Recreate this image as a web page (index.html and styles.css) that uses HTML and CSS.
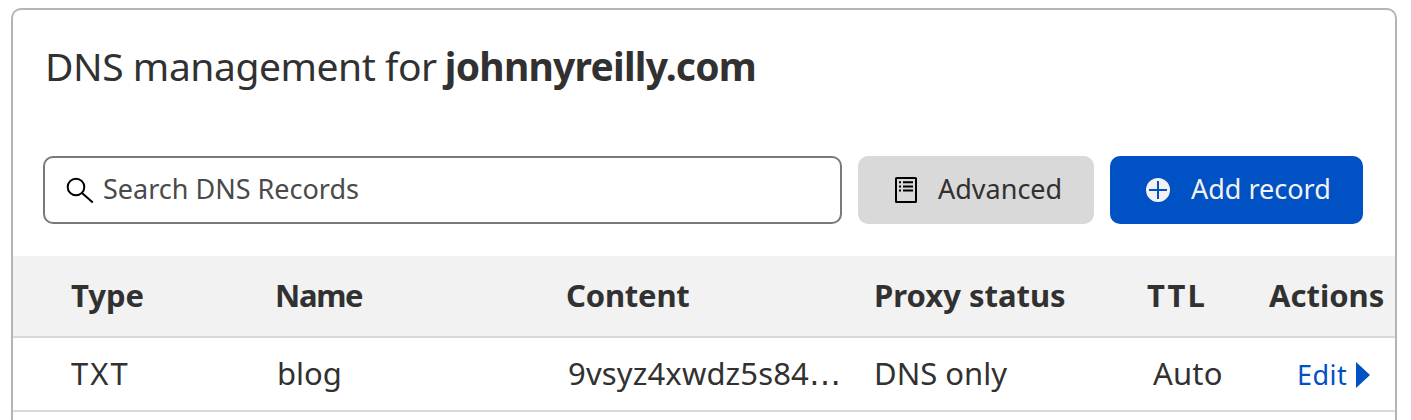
FILE: index.html
```html
<!DOCTYPE html>
<html lang="en">
<head>
<meta charset="utf-8">
<title>DNS management</title>
<link rel="stylesheet" href="styles.css">
</head>
<body>
<main class="card">
  <h1 class="title"><span class="t title-lead">DNS management for</span><strong class="t title-domain">johnnyreilly.com</strong></h1>
  <div class="toolbar">
    <div class="search">
      <svg class="search-icon" viewBox="0 0 28 28"><circle cx="10" cy="10" r="8.3"/><path d="M16 16L26.8 25.5"/></svg>
      <span class="t search-text">Search DNS Records</span>
    </div>
    <button class="btn advanced">
      <svg class="list-icon" viewBox="0 0 22 26"><rect x="1" y="1" width="20" height="24" rx=".6"/><path d="M4 5.2h2M8 5.2h10M4 9.4h2M8 9.4h10M4 13.6h2M8 13.6h10"/></svg>
      <span class="t">Advanced</span>
    </button>
    <button class="btn add">
      <svg class="plus-icon" viewBox="0 0 26 26"><circle cx="13" cy="13" r="13"/><path d="M13 4v18M4 13h18"/></svg>
      <span class="t">Add record</span>
    </button>
  </div>
  <div class="row head">
    <span class="t">Type</span><span class="t h-name">Name</span><span class="t h-content">Content</span><span class="t">Proxy status</span><span class="t h-ttl">TTL</span><span class="t">Actions</span>
  </div>
  <div class="row record">
    <span class="t r-type">TXT</span><span class="t r-name">blog</span><span class="t r-content">9vsyz4xwdz5s84<span class="dots">…</span></span><span class="t">DNS only</span><span class="t r-ttl">Auto</span><a class="edit"><span class="t">Edit</span><svg class="caret" viewBox="0 0 14 26"><path d="M0 .5Q0 0 .6 .4L14 13L.6 25.6Q0 26 0 25.5z"/></svg></a>
  </div>
</main>
</body>
</html>
```
FILE: styles.css
```css
* { box-sizing: border-box; }
body { margin: 0; padding: 8px 14px 0 11px; height: 420px; overflow: hidden; background: #fff; color: #313131; font-family: "Noto Sans", "Open Sans", sans-serif; }
.card { height: 412px; border: 2px solid #b4b4b4; border-bottom: 0; border-radius: 10px 10px 0 0; overflow: hidden; }
.t { display: block; white-space: nowrap; }
.title { display: flex; gap: 8px; margin: 0; padding-left: 32px; height: 146px; line-height: 112px; font-size: 39px; font-weight: 400; }
.title-lead { letter-spacing: -.45px; }
.title-domain { letter-spacing: -.75px; }
.toolbar { display: flex; gap: 16px; padding-left: 30px; height: 100px; }
.toolbar .t { padding-bottom: 3px; }
.search { display: flex; align-items: center; width: 799px; height: 68px; border: 2px solid #797979; border-radius: 10px; padding-left: 21px; gap: 9px; font-size: 27px; color: #4a4a4a; }
.search-icon { width: 28px; height: 28px; margin-top: 2px; fill: none; stroke: #000; stroke-width: 2; }
.btn { display: flex; align-items: center; height: 68px; border: 0; border-radius: 10px; font: 27px "Noto Sans", sans-serif; padding: 0; }
.advanced { width: 236px; background: #d9d9d9; color: #313131; padding-left: 37px; gap: 21px; }
.add { width: 253px; background: #0051c3; color: #f2f2f2; padding-left: 35px; gap: 20px; }
.list-icon { width: 22px; height: 26px; fill: none; stroke: #000; stroke-width: 2; }
.plus-icon { width: 26px; height: 26px; fill: #f2f2f2; stroke: #0051c3; stroke-width: 2; }
.row { display: grid; grid-template-columns: 205px 290px 308px 273px 122px 1fr; padding: 0 0 2px 58px; align-items: center; font-size: 31px; line-height: 42px; }
.head { height: 82px; background: #f2f2f2; border-bottom: 2px solid #d9d9d9; font-weight: 700; }
.h-name { letter-spacing: -1.3px; margin-left: -1px; }
.h-content { letter-spacing: -.2px; }
.h-ttl { letter-spacing: 2px; }
.record { height: 74px; border-bottom: 2px solid #d9d9d9; }
.r-type { letter-spacing: 2px; }
.r-name { padding-left: 1px; }
.r-content { padding-left: 2px; letter-spacing: .15px; }
.dots { font-family: "DejaVu Sans", sans-serif; font-size: 32px; line-height: 1; }
.r-ttl { padding-left: 6px; letter-spacing: .2px; }
.edit { display: flex; align-items: center; gap: 9px; color: #0051c3; font-size: 27px; padding: 3px 0 0 28px; }
.edit .t { letter-spacing: .5px; }
.caret { width: 14px; height: 26px; fill: #0051c3; }
```
